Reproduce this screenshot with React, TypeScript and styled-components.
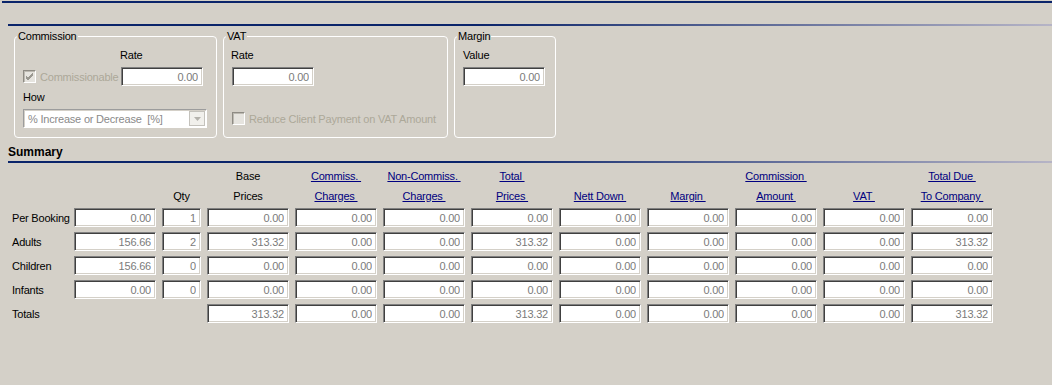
import React from 'react';
import styled, {createGlobalStyle} from 'styled-components';

const GlobalStyle = createGlobalStyle`
	body {
		margin: 0;
		background: #d4d0c8;
		font-family: "Liberation Sans", Arial, sans-serif;
		font-size: 11px;
		letter-spacing: -0.2px;
		color: #000;
	}
`;

const Page = styled.div`
	height: 385px;
	overflow: hidden;
	background: #d4d0c8;
`;

const TopRule = styled.div`
	height: 2px;
	margin: 1px 0 0 2px;
	background: #0a246a;
`;

const FadeRule = styled.div<{$top: number}>`
	height: 2px;
	margin: ${p => p.$top}px 0 0 8px;
	background: linear-gradient(to right, #0a246a 0%, #0a246a 45%, #b6b4c6 100%);
`;

const GroupRow = styled.div`
	display: flex;
	gap: 6px;
	margin: 4px 0 0 14px;
`;

const Group = styled.fieldset<{$width: number}>`
	box-sizing: border-box;
	width: ${p => p.$width}px;
	min-width: 0;
	min-inline-size: 0;
	flex: none;
	height: 108px;
	margin: 0;
	padding: 0 0 0 2px;
	border: 1px solid #fff;
	border-radius: 4px;
`;

const Legend = styled.legend`
	padding: 0 1px;
	line-height: 13px;
`;

const GroupBody = styled.div<{$cols: string}>`
	display: grid;
	grid-template-columns: ${p => p.$cols};
	grid-template-rows: 13px 19px 13px 19px;
	row-gap: 5px;
	margin: 6px 0 0 6px;
`;

const Label = styled.div<{$span?: boolean; $shift?: number}>`
	line-height: 13px;
	white-space: nowrap;
	${p => p.$span ? 'grid-column: 1 / -1;' : ''}
	margin-left: ${p => p.$shift ?? 0}px;
`;

const CheckLine = styled.label<{$span?: boolean}>`
	display: flex;
	align-items: center;
	gap: 4px;
	color: #aca899;
	white-space: nowrap;
	${p => p.$span ? 'grid-column: 1 / -1;' : ''}
`;

const CheckBox = styled.span`
	box-sizing: border-box;
	flex: none;
	display: inline-flex;
	align-items: center;
	justify-content: center;
	width: 13px;
	height: 13px;
	border: 1px solid;
	border-color: #8e8b84 #fff #fff #8e8b84;
	box-shadow: inset 1px 1px 0 #bcb9b1;
	background: #e6e4df;
`;

const Field = styled.input<{$width?: number}>`
	box-sizing: border-box;
	width: ${p => p.$width ?? 82}px;
	height: 19px;
	margin: 0;
	padding: 0 4px 0 2px;
	border: 1px solid;
	border-color: #808080 #fff #fff #808080;
	box-shadow: inset 1px 1px 0 #404040, inset -1px -1px 0 #d4d0c8;
	background: #fff;
	font: inherit;
	letter-spacing: inherit;
	color: #7b7b7b;
	text-align: right;
	outline: none;
`;

const Select = styled.div`
	grid-column: 1 / -1;
	box-sizing: border-box;
	width: 184px;
	height: 19px;
	display: flex;
	align-items: center;
	justify-content: space-between;
	padding: 0 1px 0 4px;
	border: 1px solid;
	border-color: #9c9c9c #fff #fff #9c9c9c;
	box-shadow: inset 1px 1px 0 #d4d0c8;
	background: #fff;
	color: #8a8a8a;
	white-space: pre;
`;

const DropButton = styled.span`
	box-sizing: border-box;
	width: 16px;
	height: 15px;
	display: flex;
	align-items: center;
	justify-content: center;
	border: 1px solid #c4c2bc;
	background: #f1f0ec;
`;

const SectionTitle = styled.div`
	margin: 8px 0 0 8px;
	font-size: 12px;
	font-weight: bold;
	letter-spacing: 0;
	line-height: 13px;
`;

const columns = '56px 82px 39px repeat(9, 82px)';

const HeadGrid = styled.div`
	display: grid;
	grid-template-columns: ${columns};
	grid-auto-rows: 20px;
	column-gap: 6px;
	margin: 3px 0 0 12px;
`;

const HeadCell = styled.div<{$link?: boolean}>`
	display: flex;
	align-items: center;
	justify-content: center;
	white-space: pre;
	color: ${p => p.$link ? '#000080' : '#000'};
	text-decoration: ${p => p.$link ? 'underline' : 'none'};
`;

const BodyGrid = styled.div`
	display: grid;
	grid-template-columns: ${columns};
	grid-auto-rows: 19px;
	gap: 5px 6px;
	margin: 2px 0 0 12px;
`;

const RowLabel = styled.div`
	display: flex;
	align-items: center;
	white-space: nowrap;
`;

const Tick = () => (
	<svg width="9" height="9" viewBox="0 0 9 9">
		<path d="M1 4 L3 6 L8 1 M1 5 L3 7 L8 2 M1 6 L3 8 L8 3" stroke="#9a9891" strokeWidth="1" fill="none"/>
	</svg>
);

const Arrow = () => (
	<svg width="7" height="4" viewBox="0 0 7 4">
		<path d="M0 0 H7 L3.5 4 Z" fill="#b4b2ac"/>
	</svg>
);

const zero = '0.00';

const rows = [
	{label: 'Per Booking', price: zero, qty: '1', values: Array(9).fill(zero)},
	{label: 'Adults', price: '156.66', qty: '2', values: ['313.32', zero, zero, '313.32', zero, zero, zero, zero, '313.32']},
	{label: 'Children', price: '156.66', qty: '0', values: Array(9).fill(zero)},
	{label: 'Infants', price: zero, qty: '0', values: Array(9).fill(zero)},
	{label: 'Totals', values: ['313.32', zero, zero, '313.32', zero, zero, zero, zero, '313.32']}
];

type Head = {text: string; link?: boolean};

// column captions, one entry per grid column (label, price, qty, then the nine amounts)
const topHeads: (Head | null)[] = [
	null, null, null,
	{text: 'Base'},
	{text: 'Commiss. ', link: true},
	{text: 'Non-Commiss. ', link: true},
	{text: 'Total ', link: true},
	null, null,
	{text: 'Commission ', link: true},
	null,
	{text: 'Total Due ', link: true}
];

const bottomHeads: (Head | null)[] = [
	null, null,
	{text: 'Qty'},
	{text: 'Prices'},
	{text: 'Charges ', link: true},
	{text: 'Charges ', link: true},
	{text: 'Prices ', link: true},
	{text: 'Nett Down ', link: true},
	{text: 'Margin ', link: true},
	{text: 'Amount ', link: true},
	{text: 'VAT ', link: true},
	{text: 'To Company ', link: true}
];

const HeadRow = ({cells}: {cells: (Head | null)[]}) => (
	<>
		{cells.map((c, i) => (
			<HeadCell key={i} $link={c?.link}>{c?.text}</HeadCell>
		))}
	</>
);

const App = (): JSX.Element => (
	<Page>
		<GlobalStyle/>
		<TopRule/>
		<FadeRule $top={21}/>
		<GroupRow>
			<Group $width={203}>
				<Legend>Commission</Legend>
				<GroupBody $cols="98px 82px">
					<span/>
					<Label $shift={-1}>Rate</Label>
					<CheckLine>
						<CheckBox><Tick/></CheckBox>
						Commissionable
					</CheckLine>
					<Field readOnly value={zero}/>
					<Label $span>How</Label>
					<Select>
						{'% Increase or Decrease  [%]'}
						<DropButton><Arrow/></DropButton>
					</Select>
				</GroupBody>
			</Group>
			<Group $width={225}>
				<Legend>VAT</Legend>
				<GroupBody $cols="82px">
					<Label $shift={-1}>Rate</Label>
					<Field readOnly value={zero}/>
					<span/>
					<CheckLine $span>
						<CheckBox/>
						Reduce Client Payment on VAT Amount
					</CheckLine>
				</GroupBody>
			</Group>
			<Group $width={102}>
				<Legend>Margin</Legend>
				<GroupBody $cols="82px">
					<Label>Value</Label>
					<Field readOnly value={zero}/>
				</GroupBody>
			</Group>
		</GroupRow>
		<SectionTitle>Summary</SectionTitle>
		<FadeRule $top={2}/>
		<HeadGrid>
			<HeadRow cells={topHeads}/>
			<HeadRow cells={bottomHeads}/>
		</HeadGrid>
		<BodyGrid>
			{rows.map(r => (
				<React.Fragment key={r.label}>
					<RowLabel>{r.label}</RowLabel>
					{r.price !== undefined ? <Field readOnly value={r.price}/> : <span/>}
					{r.qty !== undefined ? <Field readOnly value={r.qty} $width={39}/> : <span/>}
					{r.values.map((v, i) => <Field key={i} readOnly value={v}/>)}
				</React.Fragment>
			))}
		</BodyGrid>
	</Page>
);

export default App;
